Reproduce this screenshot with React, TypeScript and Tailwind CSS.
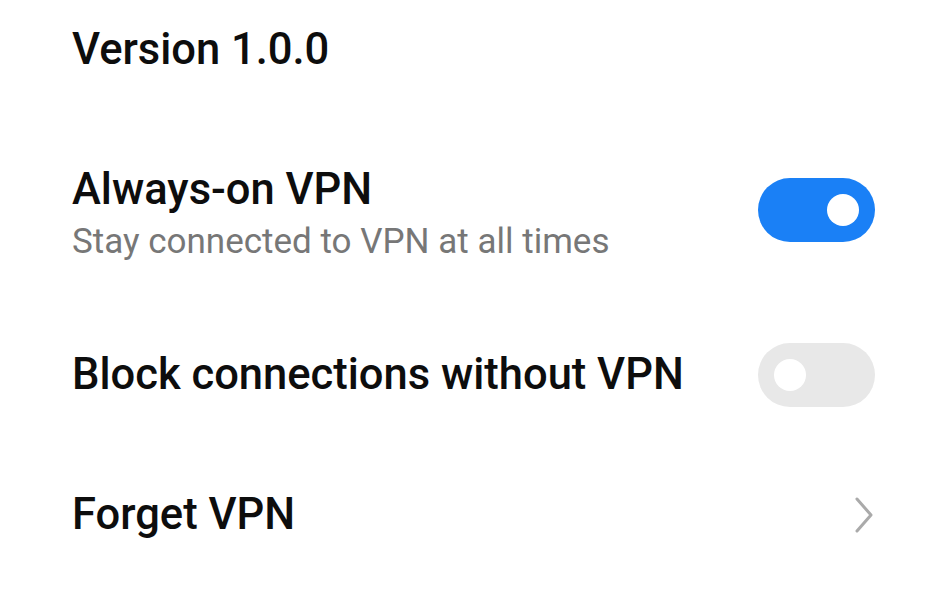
import React from "react";

function Toggle({ on }: { on: boolean }) {
  return (
    <div
      className={`flex h-[64px] w-[117px] items-center rounded-full px-[16px] ${
        on ? "justify-end bg-[#1a80f6]" : "justify-start bg-[#e8e8e8]"
      }`}
    >
      <div className="h-[32px] w-[32px] rounded-full bg-white" />
    </div>
  );
}

export default function App() {
  return (
    <div
      className="h-[608px] w-[945px] overflow-hidden bg-white pl-[72px] pr-[70px]"
      style={{ fontFamily: "Roboto, 'Noto Sans', sans-serif" }}
    >
      {/* Version */}
      <div className="flex h-[100px] items-center">
        <span className="text-[43.5px] font-medium leading-none text-[#0d0d0d]">Version 1.0.0</span>
      </div>

      {/* Always-on VPN */}
      <div className="flex h-[234px] items-center justify-between">
        <div className="flex flex-col">
          <span className="text-[43.5px] font-medium leading-[50px] text-[#0d0d0d]">Always-on VPN</span>
          <span className="text-[35px] leading-[54px] text-[#777777]">Stay connected to VPN at all times</span>
        </div>
        <div className="mb-[14px]">
          <Toggle on />
        </div>
      </div>

      {/* Block connections */}
      <div className="flex h-[82px] items-center justify-between">
        <span className="text-[43.5px] font-medium leading-none text-[#0d0d0d]">Block connections without VPN</span>
        <Toggle on={false} />
      </div>

      {/* Forget VPN */}
      <div className="flex h-[198px] items-center justify-between">
        <span className="text-[43.5px] font-medium leading-none text-[#0d0d0d]">Forget VPN</span>
        <svg width="20" height="38" viewBox="0 0 20 38" className="mr-[1px]">
          <path d="M3 3 L17 19 L3 35" fill="none" stroke="#aaaaaa" strokeWidth="3" strokeLinecap="round" strokeLinejoin="round" />
        </svg>
      </div>
    </div>
  );
}
